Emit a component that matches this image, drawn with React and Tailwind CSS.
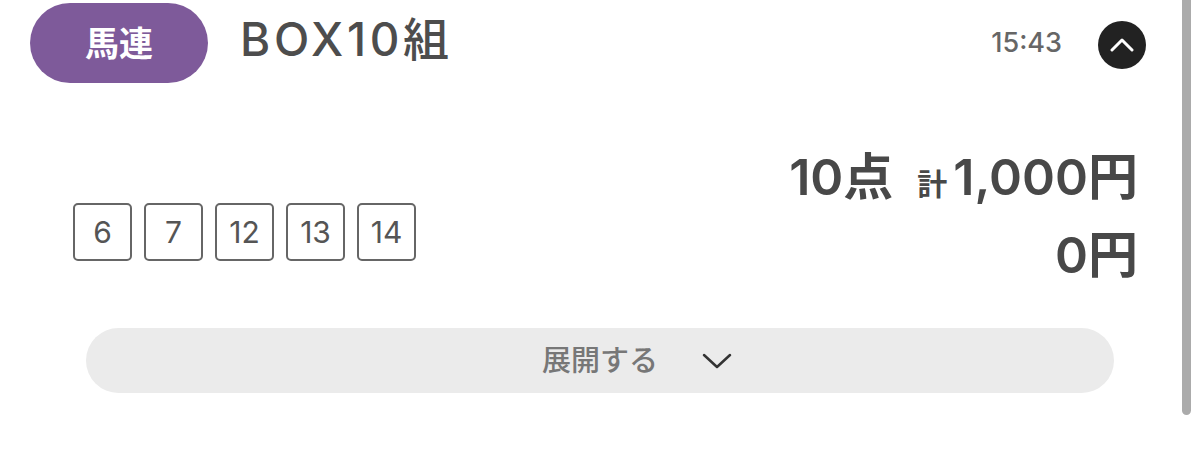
import React from "react";

const FONT = { fontFamily: 'Inter, "Noto Sans CJK JP", sans-serif' };

const numbers = [6, 7, 12, 13, 14];

const ChevronUp = () => (
  <svg width="24" height="14" viewBox="0 0 24 14" fill="none">
    <polyline points="2,12 12,2 22,12" stroke="white" strokeWidth="3" strokeLinecap="round" strokeLinejoin="round" />
  </svg>
);

const ChevronDown = () => (
  <svg width="30" height="16" viewBox="0 0 30 16" fill="none">
    <polyline points="2,2 15,14 28,2" stroke="#333" strokeWidth="2.5" strokeLinecap="round" strokeLinejoin="round" />
  </svg>
);

export default function App() {
  return (
    <div className="relative w-[1200px] h-[453px] bg-white overflow-hidden text-[#4a4a4a]" style={FONT}>
      {/* Header */}
      <div className="flex items-center pl-[30px] pr-[54px] pt-[3px]">
        <div className="w-[178px] h-[80px] rounded-full bg-[#7e5a9a] flex items-center justify-center text-white text-[34px] font-semibold">
          馬連
        </div>
        <div className="ml-[32px] text-[46px] tracking-[0.08em] font-medium text-[#4d4d4d] -mt-[8px]">BOX10組</div>
        <div className="ml-auto text-[27px] text-[#666] font-medium">15:43</div>
        <div className="ml-[36px] w-[48px] h-[48px] rounded-full bg-[#222] flex items-center justify-center mt-[4px]">
          <ChevronUp />
        </div>
      </div>

      {/* Body */}
      <div className="flex justify-between items-start pl-[73px] pr-[62px] mt-[64px]">
        <div className="flex gap-[12px] mt-[56px]">
          {numbers.map((n) => (
            <div
              key={n}
              className="w-[59px] h-[58px] border-2 border-[#666] rounded-[5px] flex items-center justify-center text-[30px] text-[#555]"
            >
              {n}
            </div>
          ))}
        </div>
        <div className="flex flex-col items-end font-semibold text-[#484848] -mt-[7px]">
          <div className="flex items-baseline h-[60px]">
            <span className="text-[50px]">10点</span>
            <span className="text-[30px] ml-[24px]">計</span>
            <span className="text-[50px] ml-[6px]">1,000円</span>
          </div>
          <div className="text-[50px] h-[60px] mt-[25px] leading-[60px]">0円</div>
        </div>
      </div>

      {/* Expand */}
      <div className="mx-[86px] mt-[43px] h-[65px] rounded-full bg-[#ebebeb] flex items-center justify-center">
        <span className="relative text-[29px] text-[#777] font-medium">
          展開する
          <span className="absolute left-full top-1/2 -translate-y-1/2 ml-[44px] flex">
            <ChevronDown />
          </span>
        </span>
      </div>

      {/* Scroll indicator */}
      <div className="absolute top-0 right-[9px] w-[9px] h-[415px] bg-[#ababab] rounded-b-full" />
    </div>
  );
}
